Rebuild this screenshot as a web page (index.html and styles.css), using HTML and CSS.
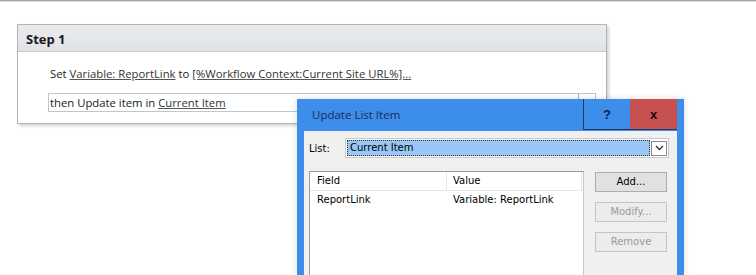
FILE: index.html
```html
<!DOCTYPE html>
<html>
<head>
<meta charset="utf-8">
<link rel="stylesheet" href="styles.css">
</head>
<body>
<div class="topline"></div>
<div class="step">
  <div class="step-head">Step 1</div>
  <div class="step-body">
    <div class="line1">Set <span class="lnk">Variable: ReportLink</span> to <span class="lnk">[%Workflow Context:Current Site URL%]...</span></div>
    <div class="line2"><span class="line2-text">then Update item in <span class="lnk">Current Item</span></span><span class="line2-btn"></span></div>
  </div>
</div>
<div class="dialog">
  <div class="titlebar">
    <span class="title">Update List Item</span>
    <span class="tb-btn help">?</span>
    <span class="tb-btn close">x</span>
  </div>
  <div class="client">
    <div class="list-row">
      <span class="list-label">List:</span>
      <div class="combo">
        <div class="sel">Current Item</div>
        <div class="dd"><svg width="9" height="6" viewBox="0 0 9 6"><path d="M1 1 L4.5 4.5 L8 1" fill="none" stroke="#333" stroke-width="1.3"/></svg></div>
      </div>
    </div>
    <div class="main">
      <div class="listview">
        <div class="lv-head"><div class="c1">Field</div><div class="c2">Value</div></div>
        <div class="lv-row"><div class="c1">ReportLink</div><div class="c2">Variable: ReportLink</div></div>
      </div>
      <div class="buttons">
        <div class="btn">Add...</div>
        <div class="btn disabled">Modify...</div>
        <div class="btn disabled">Remove</div>
      </div>
    </div>
  </div>
</div>
</body>
</html>
```

FILE: styles.css
```css
html, body {
  margin: 0;
  padding: 0;
  background: #fff;
  overflow: hidden;
  height: 275px;
}
body {
  position: relative;
  font-family: "Open Sans", "Noto Sans", sans-serif;
  font-size: 11.3px;
  color: #222;
}
.topline {
  height: 1px;
  margin-top: 0;
  background: #a6a6a6;
  border-bottom: 1px solid #d8d8d8;
}
.step {
  margin: 22px 0 0 17px;
  width: 588px;
  height: 98px;
  border: 1px solid #b4b4b4;
  box-shadow: 2px 2px 3px rgba(0,0,0,0.18);
  background: #fff;
}
.step-head {
  height: 26px;
  line-height: 28px;
  padding-left: 8px;
  font-size: 13px;
  font-weight: bold;
  color: #1a1a1a;
  background: linear-gradient(#e9ebee, #dfe3e8);
  border-bottom: 1px solid #c9cdd2;
}
.step-body {
  padding: 13px 0 0 30px;
}
.line1 {
  padding-left: 2px;
  height: 18px;
  line-height: 18px;
  color: #1a1a1a;
}
.lnk {
  text-decoration: underline;
  text-decoration-color: #555;
  color: #333;
}
.line2 {
  margin-top: 10px;
  width: 546px;
  height: 17px;
  border: 1px solid #b7c9cf;
  display: flex;
  justify-content: space-between;
  align-items: flex-start;
}
.line2-text {
  padding-left: 1px;
  line-height: 18px;
  color: #1a1a1a;
}
.line2-btn {
  width: 17px;
  height: 16px;
  border-left: 1px solid #b0b0b0;
  border-bottom: 1px solid #b0b0b0;
  box-sizing: border-box;
}
.dialog {
  position: absolute;
  left: 297px;
  top: 99px;
  width: 387px;
  height: 176px;
  overflow: hidden;
  background: #3c8eea;
  box-shadow: 0 0 6px rgba(0,0,0,0.15);
  font-family: "DejaVu Sans", sans-serif;
  font-size: 10px;
  color: #000;
}
.titlebar {
  height: 32px;
  display: flex;
  align-items: stretch;
}
.title {
  flex: 1;
  padding-left: 15px;
  line-height: 32px;
  font-family: "Open Sans", sans-serif;
  font-size: 11.5px;
  color: #1c2a57;
}
.tb-btn {
  width: 47px;
  height: 31px;
  display: flex;
  align-items: center;
  justify-content: center;
  font-family: "Liberation Sans", sans-serif;
  font-weight: bold;
  font-size: 13px;
  color: #13204a;
  box-sizing: border-box;
}
.help {
  border-left: 1px solid #1e3a68;
  border-bottom: 1px solid #1e3a68;
}
.close {
  background: #c75050;
  color: #1a0a0a;
  border-bottom: 1px solid #1e3a68;
  margin-right: 7px;
}
.client {
  margin: 0 7px;
  height: 144px;
  overflow: hidden;
  background: #f0f0f0;
  padding: 7px 0 0 5px;
  box-sizing: border-box;
}
.list-row {
  display: flex;
  align-items: center;
  gap: 11px;
}
.list-label {
  width: 25px;
}
.combo {
  width: 324px;
  height: 20px;
  box-sizing: border-box;
  border: 1px solid #c9c9c9;
  background: #fff;
  display: flex;
  align-items: center;
  padding: 1px;
}
.sel {
  flex: 1;
  height: 16px;
  box-sizing: border-box;
  background: #99c6f6;
  border: 1px dotted #333;
  padding-left: 2px;
  line-height: 14px;
}
.dd {
  width: 16px;
  height: 15px;
  margin-left: 1px;
  box-sizing: border-box;
  border: 1px solid #8a8a8a;
  background: #fff;
  display: flex;
  align-items: center;
  justify-content: center;
}
.main {
  display: flex;
  margin-top: 13px;
  gap: 11px;
}
.listview {
  width: 275px;
  height: 110px;
  box-sizing: border-box;
  background: #fff;
  border: 1px solid #9a9a9a;
  border-right-color: #c8c8c8;
}
.lv-head, .lv-row {
  display: flex;
}
.lv-head {
  height: 18px;
  line-height: 18px;
  border-bottom: 1px solid #e5e5e5;
  margin-right: 1px;
  border-right: 1px solid #e5e5e5;
}
.lv-row {
  height: 18px;
  line-height: 18px;
}
.c1 {
  width: 137px;
  padding-left: 7px;
  box-sizing: border-box;
}
.lv-head .c1 {
  border-right: 1px solid #e5e5e5;
}
.c2 {
  padding-left: 6px;
}
.buttons {
  display: flex;
  flex-direction: column;
  gap: 10px;
  margin-top: 1px;
}
.btn {
  width: 72px;
  height: 20px;
  box-sizing: border-box;
  border: 1px solid #adadad;
  background: #e1e1e1;
  text-align: center;
  line-height: 18px;
}
.btn.disabled {
  background: #ececec;
  border-color: #c4c4c4;
  color: #9a9a9a;
}
```
